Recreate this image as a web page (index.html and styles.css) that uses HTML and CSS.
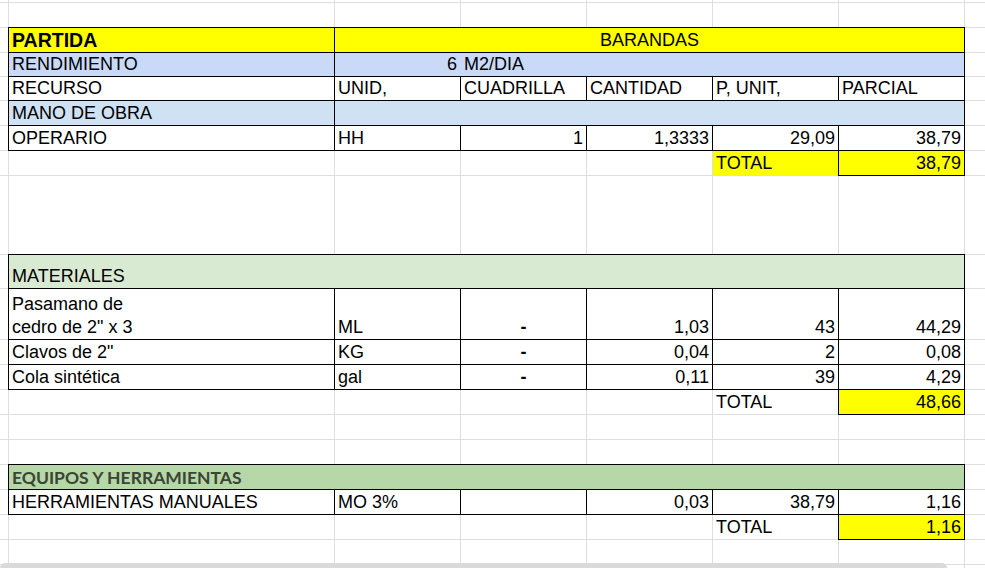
FILE: index.html
```html
<!DOCTYPE html>
<html lang="es">
<head>
<meta charset="utf-8">
<title>Análisis de costos unitarios - Barandas</title>
<link rel="stylesheet" href="styles.css">
</head>
<body>
<div class="sheet">
  <div class="row h3"></div>
  <div class="row h25"></div>

  <div class="row h25">
    <div class="c ca bx yel title">PARTIDA</div>
    <div class="c sbf bx yel mid">BARANDAS</div>
  </div>
  <div class="row h24">
    <div class="c ca bx blue1">RENDIMIENTO</div>
    <div class="c sbf bx blue1 split"><span class="split-b">6</span><span class="split-rest">M2/DIA</span></div>
  </div>
  <div class="row h24">
    <div class="c ca bx">RECURSO</div>
    <div class="c cb bx">UNID,</div>
    <div class="c cc bx">CUADRILLA</div>
    <div class="c cd bx">CANTIDAD</div>
    <div class="c ce bx">P, UNIT,</div>
    <div class="c cf bx">PARCIAL</div>
  </div>
  <div class="row h25">
    <div class="c ca bx blue2">MANO DE OBRA</div>
    <div class="c sbf bx blue2"></div>
  </div>
  <div class="row h25">
    <div class="c ca bx">OPERARIO</div>
    <div class="c cb bx">HH</div>
    <div class="c cc bx num">1</div>
    <div class="c cd bx num">1,3333</div>
    <div class="c ce bx num">29,09</div>
    <div class="c cf bx num">38,79</div>
  </div>
  <div class="row h25">
    <div class="c ce yel">TOTAL</div>
    <div class="c cf bx yel num">38,79</div>
  </div>

  <div class="row h79"></div>

  <div class="row h34">
    <div class="c saf bx green1">MATERIALES</div>
  </div>
  <div class="row h51">
    <div class="c ca bx wrap">Pasamano de<br>cedro de 2" x 3</div>
    <div class="c cb bx">ML</div>
    <div class="c cc bx dash">-</div>
    <div class="c cd bx num">1,03</div>
    <div class="c ce bx num">43</div>
    <div class="c cf bx num">44,29</div>
  </div>
  <div class="row h25">
    <div class="c ca bx">Clavos de 2"</div>
    <div class="c cb bx">KG</div>
    <div class="c cc bx dash">-</div>
    <div class="c cd bx num">0,04</div>
    <div class="c ce bx num">2</div>
    <div class="c cf bx num">0,08</div>
  </div>
  <div class="row h25">
    <div class="c ca bx">Cola sintética</div>
    <div class="c cb bx">gal</div>
    <div class="c cc bx dash">-</div>
    <div class="c cd bx num">0,11</div>
    <div class="c ce bx num">39</div>
    <div class="c cf bx num">4,29</div>
  </div>
  <div class="row h25">
    <div class="c ce">TOTAL</div>
    <div class="c cf bx yel num">48,66</div>
  </div>

  <div class="row h25"></div>
  <div class="row h25"></div>

  <div class="row h25">
    <div class="c saf bx green2 equip">EQUIPOS Y HERRAMIENTAS</div>
  </div>
  <div class="row h25">
    <div class="c ca bx">HERRAMIENTAS MANUALES</div>
    <div class="c cb bx">MO 3%</div>
    <div class="c cc bx"></div>
    <div class="c cd bx num">0,03</div>
    <div class="c ce bx num">38,79</div>
    <div class="c cf bx num">1,16</div>
  </div>
  <div class="row h25">
    <div class="c ce">TOTAL</div>
    <div class="c cf bx yel num">1,16</div>
  </div>

  <div class="row h25"></div>
  <div class="row h25"></div>
</div>
<div class="hscroll"></div>
</body>
</html>
```
FILE: styles.css
```css
* {
  box-sizing: border-box;
}

html,
body {
  margin: 0;
  padding: 0;
}

body {
  width: 985px;
  height: 568px;
  overflow: hidden;
  position: relative;
  background: #ffffff;
}

.sheet {
  font-family: "Liberation Sans", Arial, sans-serif;
  font-size: 18px;
  line-height: 21px;
  color: #000000;
  background-image: linear-gradient(to right,
    transparent 8px, #dedede 8px, #dedede 9px,
    transparent 9px, transparent 334px, #dedede 334px, #dedede 335px,
    transparent 335px, transparent 460px, #dedede 460px, #dedede 461px,
    transparent 461px, transparent 586px, #dedede 586px, #dedede 587px,
    transparent 587px, transparent 712px, #dedede 712px, #dedede 713px,
    transparent 713px, transparent 838px, #dedede 838px, #dedede 839px,
    transparent 839px, transparent 964px, #dedede 964px, #dedede 965px,
    transparent 965px);
}

.row {
  display: grid;
  grid-template-columns: 8px 325px repeat(5, 125px) 1fr;
  grid-template-rows: 100%;
  column-gap: 1px;
  border-bottom: 1px solid #dedede;
}

.h3 { height: 3px; }
.h24 { height: 24px; }
.h25 { height: 25px; }
.h34 { height: 34px; }
.h51 { height: 51px; }
.h79 { height: 79px; }

.ca { grid-column: 2; }
.cb { grid-column: 3; }
.cc { grid-column: 4; }
.cd { grid-column: 5; }
.ce { grid-column: 6; }
.cf { grid-column: 7; }
.sbf { grid-column: 3 / 8; }
.saf { grid-column: 2 / 8; }

.c {
  display: flex;
  align-items: flex-end;
  padding: 0 3px 1px;
  white-space: nowrap;
  min-width: 0;
  overflow: hidden;
}

.bx {
  box-shadow: 0 0 0 1px #000000;
}

.num {
  justify-content: flex-end;
  padding-right: 3px;
}

.mid {
  justify-content: center;
}

.dash {
  justify-content: center;
  font-weight: 700;
}

.yel { background: #ffff00; }
.blue1 { background: #c9daf8; }
.blue2 { background: #cfe2f3; }
.green1 { background: #d9ead3; }
.green2 { background: #b6d7a8; }

.title {
  font-weight: 700;
  font-size: 19.5px;
}

.equip {
  font-family: Lato, "Open Sans", sans-serif;
  font-weight: 700;
  font-size: 17.5px;
  color: #3b4534;
}

.wrap {
  white-space: normal;
  line-height: 23px;
  padding-bottom: 0;
}

.split {
  padding: 0 0 1px;
}

.split-b {
  flex: none;
  width: 126px;
  padding-right: 4px;
  text-align: right;
}

.split-rest {
  padding-left: 3px;
}

.hscroll {
  position: absolute;
  left: 0;
  top: 563px;
  width: 947px;
  height: 10px;
  border-radius: 5px;
  background: #dadada;
}
```
